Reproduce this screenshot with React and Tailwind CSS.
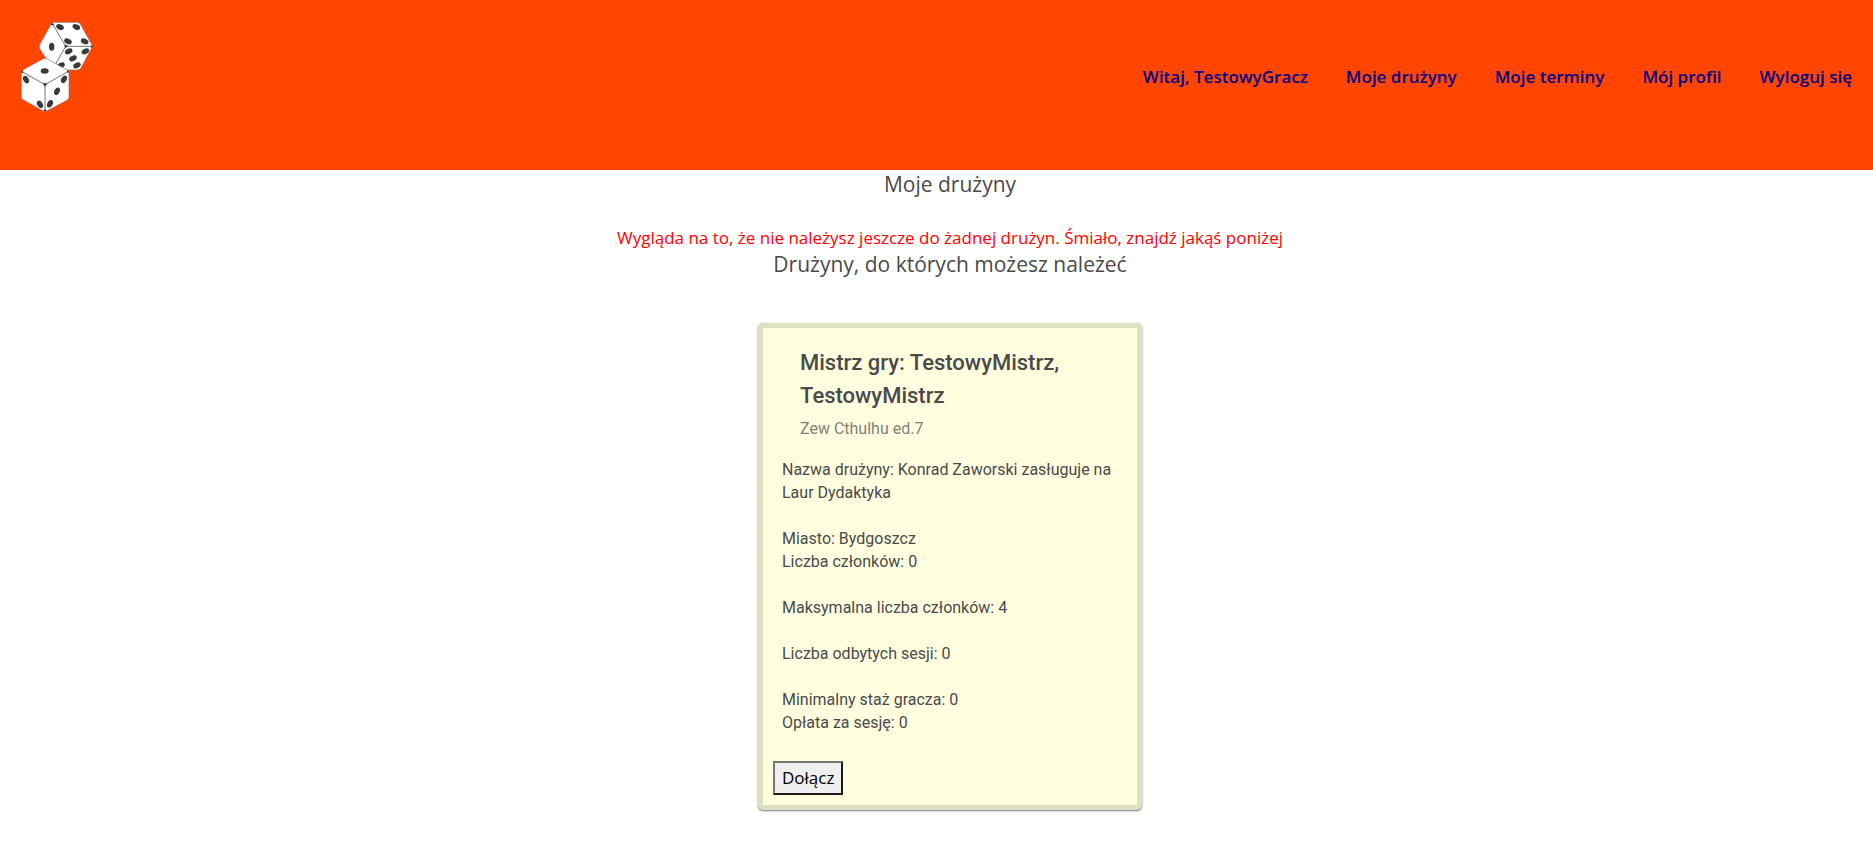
const links = ['Witaj, TestowyGracz', 'Moje drużyny', 'Moje terminy', 'Mój profil', 'Wyloguj się'];

const details = [
  ['Nazwa drużyny: Konrad Zaworski zasługuje na Laur Dydaktyka'],
  ['Miasto: Bydgoszcz', 'Liczba członków: 0'],
  ['Maksymalna liczba członków: 4'],
  ['Liczba odbytych sesji: 0'],
  ['Minimalny staż gracza: 0', 'Opłata za sesję: 0'],
];

const upperPips = [
  [180, 81, 25], [229, 81, 25], [204, 124, 25], [254, 124, 25],
  [155, 140, 90],
  [206, 154, -28], [256, 154, -28], [219, 175, -28], [183, 196, -28], [231, 196, -28],
];

const lowerPips = [
  [134, 213, 0], [78, 239, 58], [120, 313, 58],
  [192, 238, -62], [171, 274, -62], [150, 311, -62],
];

function Pips({ items }) {
  return items.map(([x, y, angle]) => (
    <ellipse key={`${x}-${y}`} cx={x} cy={y} rx="12" ry="8" fill="#3a3a3a" transform={`rotate(${angle} ${x} ${y})`} />
  ));
}

function DiceLogo() {
  return (
    <svg viewBox="63 60 219 279" className="block h-[93px] w-[73px]" role="img" aria-label="Kości do gry">
      <g stroke="#8a6a60" strokeWidth="2" strokeLinejoin="round">
        <path d="M163 67H232Q238 67 241 72L275 133Q278 139 275 144L243 204Q239 210 232 210H166Q160 210 157 205L119 146Q116 140 119 134L153 72Q156 67 163 67Z" fill="#fff" />
        <path d="M157 70L197 139H277M197 139L158 208" fill="none" stroke="#777" strokeWidth="3" />
      </g>
      <path d="M157 68l-6 7 12 1zM192 136h12l-7 9zM277 135v9l-6-4z" fill="#333" />
      <Pips items={upperPips} />
      <g stroke="#8a6a60" strokeWidth="2" strokeLinejoin="round">
        <path d="M128 177Q135 173 142 177L201 210Q207 213 207 220V291Q207 297 201 301L142 332Q135 336 128 332L69 299Q64 296 64 289V220Q64 213 70 209Z" fill="#fff" />
        <path d="M66 215L135 254L205 214M135 254V334" fill="none" stroke="#777" strokeWidth="3" />
      </g>
      <path d="M128 250h14l-7 10zM65 211v9l6-4zM206 210v9l-6-4zM130 333h10l-5-6z" fill="#333" />
      <Pips items={lowerPips} />
    </svg>
  );
}

export default function App() {
  return (
    <div className="min-h-screen bg-white font-['Open_Sans','Noto_Sans',sans-serif] text-[#4a4a4a]">
      <header className="flex h-[170px] items-start justify-between bg-[#ff4500] px-[21px] pt-5">
        <a href="#start"><DiceLogo /></a>
        <nav className="flex gap-[38px] pt-[45px] text-[17px] leading-6 font-semibold text-[#00008b]">
          {links.map((label) => (
            <a key={label} href="#menu">{label}</a>
          ))}
        </nav>
      </header>
      <main className="flex flex-col items-center pl-[27px] text-center">
        <h1 className="text-[21px] leading-7">Moje drużyny</h1>
        <p className="mt-7 text-[17px] leading-6 text-[#ff0000]">
          Wygląda na to, że nie należysz jeszcze do żadnej drużyn. Śmiało, znajdź jakąś poniżej
        </p>
        <h2 className="text-[21px] leading-7">Drużyny, do których możesz należeć</h2>
        <article className="mt-[45px] w-96 rounded-[5px] border-5 border-[#dfdfc1] bg-[#ffffdf] px-2.5 pt-[18px] pb-2.5 text-left font-[Roboto,sans-serif] shadow-[0_1px_3px_rgba(0,0,0,0.3),0_1px_1px_rgba(0,0,0,0.3)]">
          <div className="px-[27px]">
            <h3 className="text-[22px] leading-[33px] font-medium">Mistrz gry: TestowyMistrz, TestowyMistrz</h3>
            <p className="mt-[5px] text-base leading-6 text-[#81817a]">Zew Cthulhu ed.7</p>
          </div>
          <div className="mt-[17px] mb-[27px] flex flex-col gap-[23px] px-[9px] text-base leading-[23px]">
            {details.map((group) => (
              <div key={group[0]}>
                {group.map((line) => (
                  <p key={line}>{line}</p>
                ))}
              </div>
            ))}
          </div>
          <button type="button" className="block border-2 border-t-[#767676] border-r-[#1c1c1c] border-b-[#1c1c1c] border-l-[#767676] bg-[#efefef] px-[7px] py-px font-['Open_Sans','Noto_Sans',sans-serif] text-[17px] leading-7 text-black">
            Dołącz
          </button>
        </article>
      </main>
    </div>
  );
}
